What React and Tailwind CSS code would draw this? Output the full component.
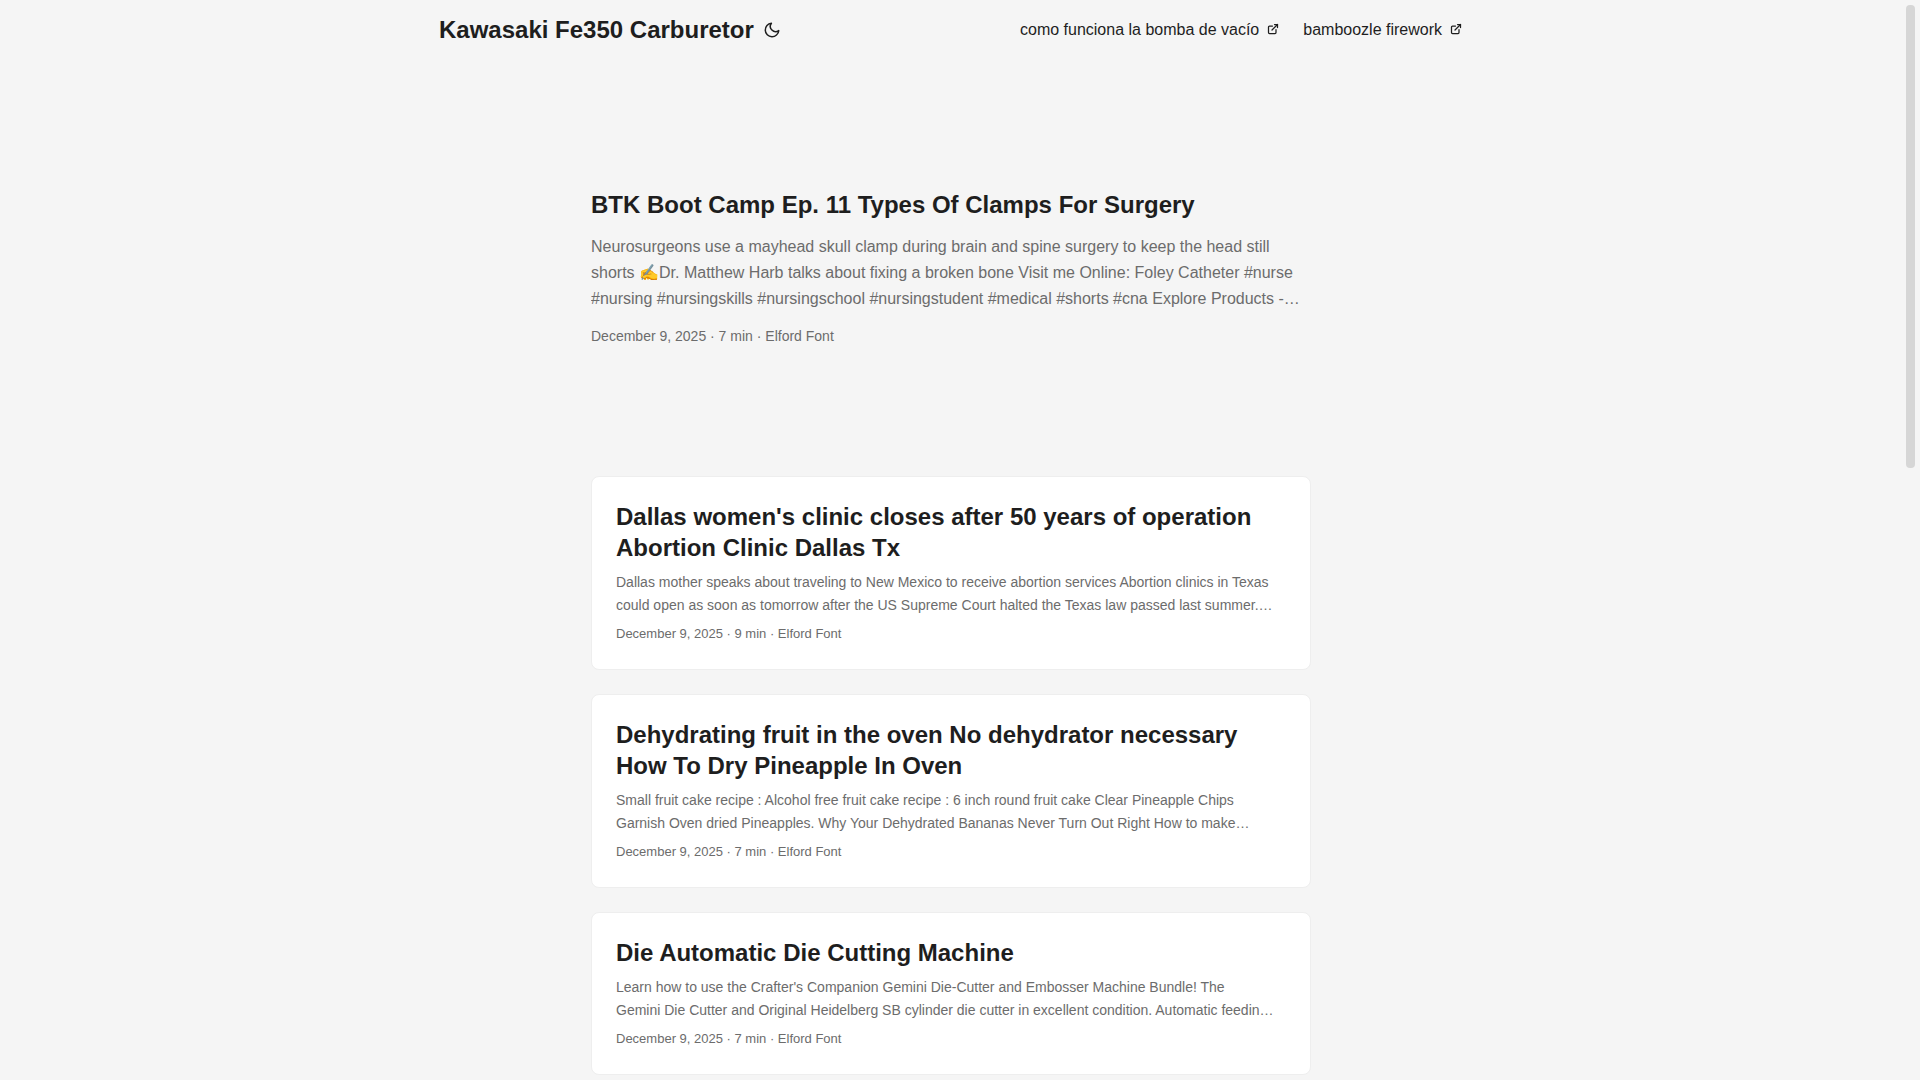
const navLinks = ["como funciona la bomba de vacío", "bamboozle firework"];

const posts = [
  {
    title: "Dallas women's clinic closes after 50 years of operation Abortion Clinic Dallas Tx",
    summary: [
      "Dallas mother speaks about traveling to New Mexico to receive abortion services Abortion clinics in Texas",
      "could open as soon as tomorrow after the US Supreme Court halted the Texas law passed last summer.…",
    ],
    meta: "December 9, 2025 · 9 min · Elford Font",
  },
  {
    title: "Dehydrating fruit in the oven No dehydrator necessary How To Dry Pineapple In Oven",
    summary: [
      "Small fruit cake recipe : Alcohol free fruit cake recipe : 6 inch round fruit cake Clear Pineapple Chips",
      "Garnish Oven dried Pineapples. Why Your Dehydrated Bananas Never Turn Out Right How to make…",
    ],
    meta: "December 9, 2025 · 7 min · Elford Font",
  },
  {
    title: "Die Automatic Die Cutting Machine",
    summary: [
      "Learn how to use the Crafter's Companion Gemini Die-Cutter and Embosser Machine Bundle! The",
      "Gemini Die Cutter and Original Heidelberg SB cylinder die cutter in excellent condition. Automatic feedin…",
    ],
    meta: "December 9, 2025 · 7 min · Elford Font",
  },
];

function MoonIcon() {
  return (
    <svg
      className="h-[18px] w-6"
      viewBox="0 0 24 24"
      fill="none"
      stroke="currentColor"
      strokeWidth="2"
      strokeLinecap="round"
      strokeLinejoin="round"
      aria-hidden="true"
    >
      <path d="M21 12.79A9 9 0 1 1 11.21 3 7 7 0 0 0 21 12.79z" />
    </svg>
  );
}

function ExternalIcon() {
  return (
    <svg
      className="mb-0.5 size-3"
      viewBox="0 0 24 24"
      fill="none"
      stroke="currentColor"
      strokeWidth="2.5"
      strokeLinecap="round"
      strokeLinejoin="round"
      aria-hidden="true"
    >
      <path d="M18 13v6a2 2 0 0 1-2 2H5a2 2 0 0 1-2-2V8a2 2 0 0 1 2-2h6" />
      <path d="M15 3h6v6" />
      <path d="M10 14L21 3" />
    </svg>
  );
}

function Header() {
  return (
    <header>
      <nav className="mx-auto flex max-w-[1071px] flex-wrap justify-between px-6 leading-[60px]">
        <div className="flex items-center">
          <a href="#home" className="text-2xl/[60px] font-bold">
            Kawasaki Fe350 Carburetor
          </a>
          <button type="button" aria-label="Toggle theme" className="ml-1.5 cursor-pointer">
            <MoonIcon />
          </button>
        </div>
        <ul className="flex gap-6">
          {navLinks.map((label) => (
            <li key={label}>
              <a href="#link" className="flex items-center gap-2">
                {label}
                <ExternalIcon />
              </a>
            </li>
          ))}
        </ul>
      </nav>
    </header>
  );
}

function PostCard({ title, summary, meta }) {
  return (
    <article className="mb-6 rounded-lg border border-[#eeeeee] bg-white p-6">
      <h2 className="text-2xl/[31px] font-bold">{title}</h2>
      <p className="mt-2 mb-1.5 line-clamp-2 text-sm/[23px] text-[#6c6c6c]">
        {summary[0]}
        <br />
        {summary[1]}
      </p>
      <footer className="text-[13px]/[22px] text-[#6c6c6c]">{meta}</footer>
    </article>
  );
}

export default function App() {
  return (
    <div className="flex h-screen overflow-hidden bg-[#f5f5f5] font-[Arial,'Liberation_Sans',sans-serif] text-base text-[#1e1e1e] [text-rendering:optimizeLegibility]">
      <div className="min-w-0 flex-1">
        <Header />
        <main className="mx-auto max-w-[767px] py-6 pl-6 pr-[23px]">
          <article className="mt-6 mb-12 flex min-h-80 flex-col justify-center">
            <h1 className="text-2xl/[31px] font-bold">BTK Boot Camp Ep. 11 Types Of Clamps For Surgery</h1>
            <p className="mt-3.5 mb-3 line-clamp-3 text-base/[26px] text-[#6c6c6c]">
              Neurosurgeons use a mayhead skull clamp during brain and spine surgery to keep the head still
              shorts ✍️Dr. Matthew Harb talks about fixing a broken bone Visit me Online: Foley Catheter #nurse
              #nursing #nursingskills #nursingschool #nursingstudent #medical #shorts #cna Explore Products -…
            </p>
            <footer className="text-sm/6 text-[#6c6c6c]">December 9, 2025 · 7 min · Elford Font</footer>
          </article>
          {posts.map((post) => (
            <PostCard key={post.title} {...post} />
          ))}
        </main>
      </div>
      <div className="w-[19px] shrink-0 p-[5px]" aria-hidden="true">
        <div className="h-[463px] rounded bg-[#d6d6d6]" />
      </div>
    </div>
  );
}
